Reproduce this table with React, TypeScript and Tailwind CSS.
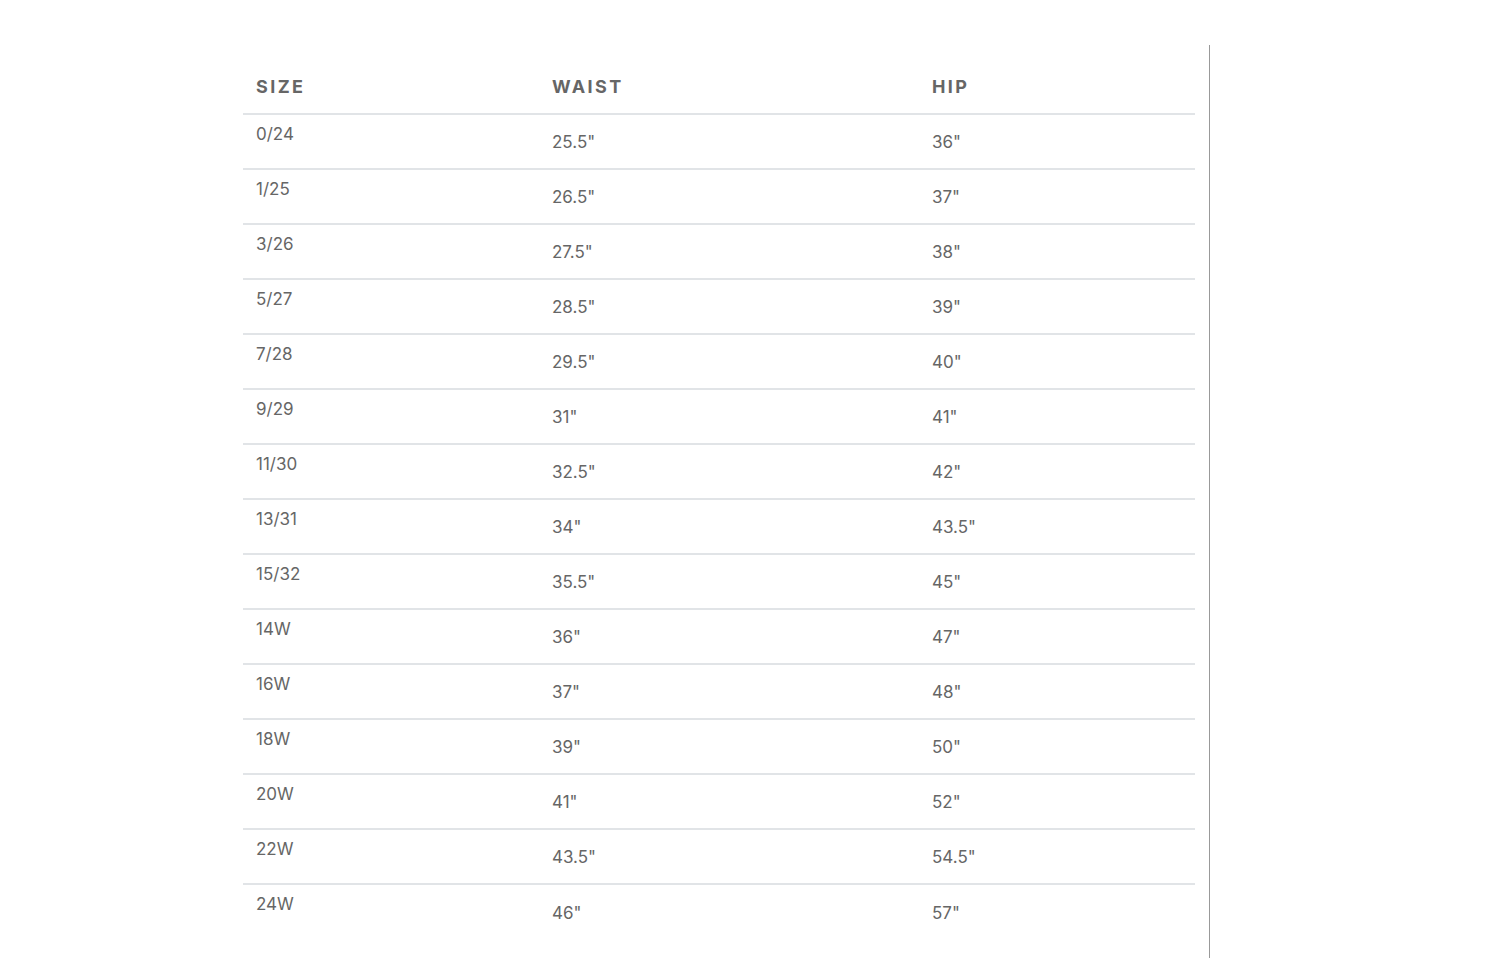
const rows: [string, string, string][] = [
  ["0/24", '25.5"', '36"'],
  ["1/25", '26.5"', '37"'],
  ["3/26", '27.5"', '38"'],
  ["5/27", '28.5"', '39"'],
  ["7/28", '29.5"', '40"'],
  ["9/29", '31"', '41"'],
  ["11/30", '32.5"', '42"'],
  ["13/31", '34"', '43.5"'],
  ["15/32", '35.5"', '45"'],
  ["14W", '36"', '47"'],
  ["16W", '37"', '48"'],
  ["18W", '39"', '50"'],
  ["20W", '41"', '52"'],
  ["22W", '43.5"', '54.5"'],
  ["24W", '46"', '57"'],
];

export default function App() {
  return (
    <div className="min-h-screen bg-white font-['Inter',sans-serif] text-[#666]">
      <div className="ml-[243px] mt-[45px] w-[967px] min-h-[960px] border-r border-[#999] pr-[14px]">
        <div className="grid h-[70px] grid-cols-[296px_380px_276px] items-end border-b-2 border-[#e1e4e7] pb-[14px] text-[18px] font-bold uppercase leading-6 tracking-[2.4px] text-[#666]">
          <div className="pl-[13px]">Size</div>
          <div className="pl-[13px]">Waist</div>
          <div className="pl-[13px]">Hip</div>
        </div>
        {rows.map(([size, waist, hip], i) => (
          <div
            key={size}
            className={`grid h-[55px] grid-cols-[296px_380px_276px] text-[17px] leading-6 ${
              i < rows.length - 1 ? "border-b-2 border-[#e1e4e7]" : ""
            }`}
          >
            <div className="pl-[13px] pt-[7px]">{size}</div>
            <div className="flex items-center pl-[13px]">{waist}</div>
            <div className="flex items-center pl-[13px]">{hip}</div>
          </div>
        ))}
      </div>
    </div>
  );
}
